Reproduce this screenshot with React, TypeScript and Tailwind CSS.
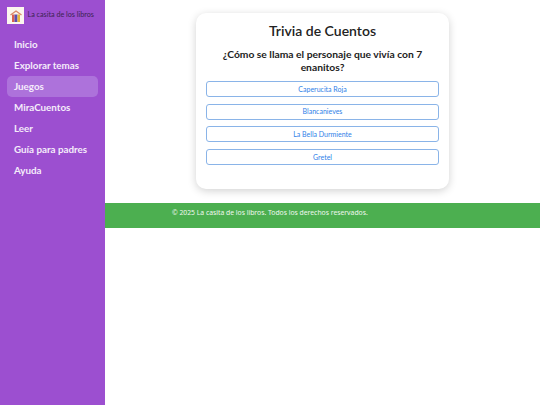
const font = "font-['Lato',sans-serif]";

const navItems = ["Inicio", "Explorar temas", "Juegos", "MiraCuentos", "Leer", "Guía para padres", "Ayuda"];
const answers = ["Caperucita Roja", "Blancanieves", "La Bella Durmiente", "Gretel"];

function Logo() {
  return (
    <div className="flex h-[17px] w-[17px] shrink-0 items-center justify-center bg-[#fbf6ee]">
      <svg width="14" height="14" viewBox="0 0 14 14">
        <path d="M1.5 6 L7 2 L12.5 6" fill="none" stroke="#d98a6a" strokeWidth="1.4" />
        <rect x="3" y="5.5" width="2.5" height="7.5" fill="#d9604f" />
        <rect x="5.5" y="5.5" width="3" height="7.5" fill="#5a4fb0" />
        <rect x="8.5" y="5.5" width="2.5" height="7.5" fill="#e6b43c" />
      </svg>
    </div>
  );
}

export default function App() {
  return (
    <div className="flex min-h-[405px] bg-white">
      {/* Sidebar */}
      <aside className={`flex w-[105px] shrink-0 flex-col bg-[#9c4fd0] px-[7px] pt-[7px] ${font}`}>
        <div className="flex items-center gap-[3.5px]">
          <Logo />
          <span className="whitespace-nowrap text-[7.2px] text-[#3b2352]">La casita de los libros</span>
        </div>
        <nav className="mt-[10px] flex flex-col">
          {navItems.map((item) => (
            <a
              key={item}
              className={`flex h-[21px] items-center rounded-[5px] px-[7px] text-[9.8px] font-bold whitespace-nowrap text-[#f5ecfb] ${item === "Juegos" ? "bg-[#ad72db]" : ""}`}
            >
              {item}
            </a>
          ))}
        </nav>
      </aside>

      {/* Main */}
      <main className="flex-1">
        <div className="flex justify-center pt-[13px]">
          <div className={`flex h-[176px] w-[253px] flex-col rounded-[10px] bg-white px-[10px] pt-[9px] shadow-[0_2px_8px_rgba(0,0,0,0.18)] ${font}`}>
            <h1 className="text-center text-[14px] leading-[18px] font-semibold text-[#222]">Trivia de Cuentos</h1>
            <h2 className="mt-[8px] px-[4px] text-center text-[10.3px] leading-[13px] font-bold text-[#222]">
              ¿Cómo se llama el personaje que vivía con 7 enanitos?
            </h2>
            <div className="mt-[7px] flex flex-col gap-[6.7px]">
              {answers.map((a) => (
                <button
                  key={a}
                  className="h-[16px] rounded-[3px] border border-[#8ab4e8] bg-white text-[7px] text-[#2f7fe8]"
                >
                  {a}
                </button>
              ))}
            </div>
          </div>
        </div>
        <footer className="mt-[14px] flex h-[25px] bg-[#4caf50] pt-[4.5px] pl-[67px] font-['Noto_Sans',sans-serif] text-[6.8px] text-[#f1f8f1]">
          © 2025 La casita de los libros. Todos los derechos reservados.
        </footer>
      </main>
    </div>
  );
}
